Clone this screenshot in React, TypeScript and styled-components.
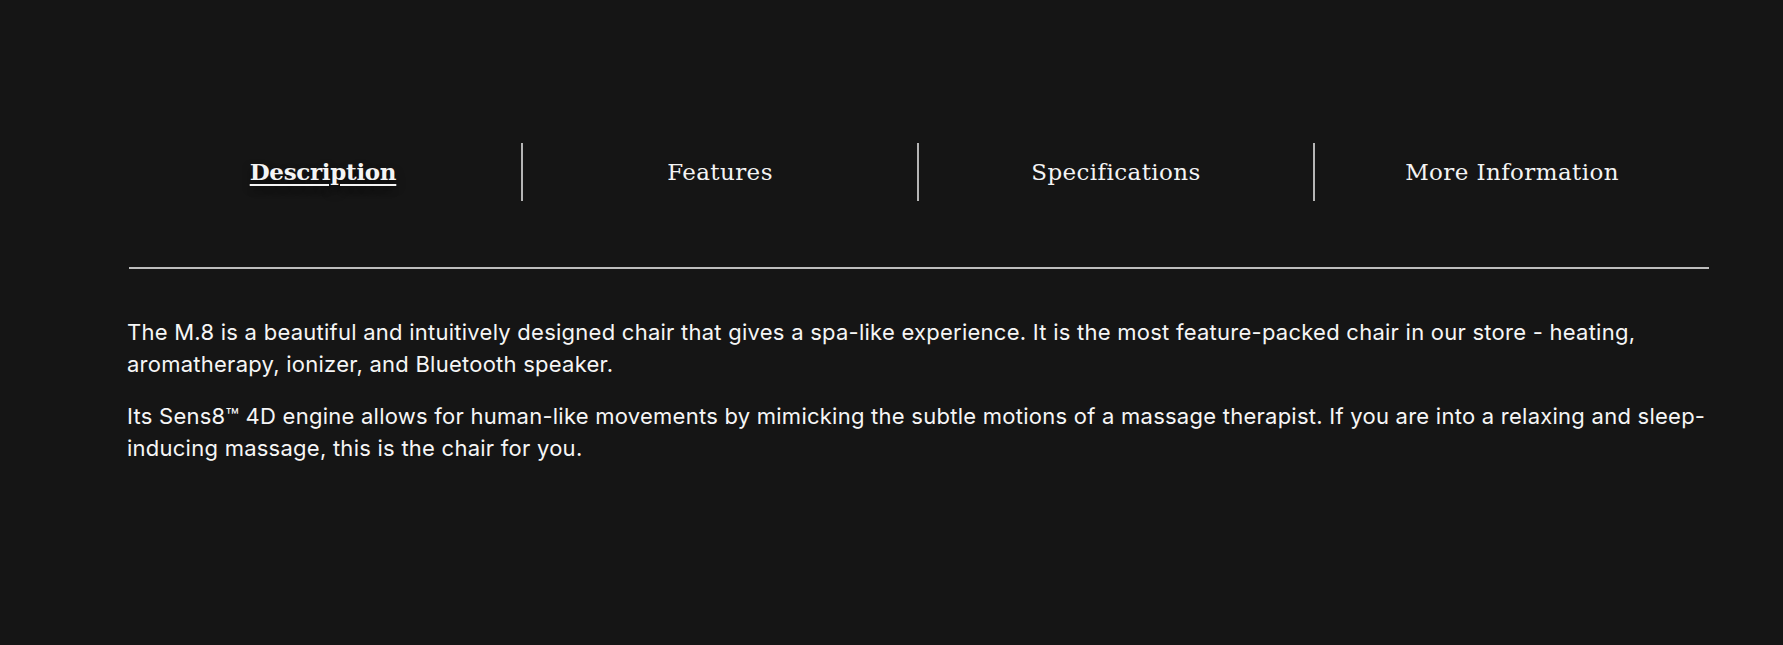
import React, { useState } from "react";
import styled, { createGlobalStyle } from "styled-components";

const GlobalStyle = createGlobalStyle`
  html, body {
    margin: 0;
    padding: 0;
    background: #151515;
  }
  body {
    font-family: Inter, "Noto Sans", sans-serif;
    color: #ffffff;
  }
`;

const Page = styled.div`
  min-height: 645px;
  box-sizing: border-box;
  padding: 143px 74px 0 125px;
`;

const TabBar = styled.div`
  display: grid;
  grid-template-columns: repeat(4, 1fr);
`;

const Tab = styled.button<{ $active?: boolean; $first?: boolean }>`
  height: 58px;
  display: flex;
  align-items: center;
  justify-content: center;
  background: none;
  border: none;
  border-left: ${(p) => (p.$first ? "none" : "2px solid #b5b5b5")};
  padding: 0;
  padding-bottom: 1px;
  color: #f4f4f4;
  font-family: "DejaVu Serif", "Liberation Serif", serif;
  font-size: 23px;
  font-weight: ${(p) => (p.$active ? 700 : 400)};
  letter-spacing: ${(p) => (p.$active ? "-0.3px" : "0.4px")};
  text-decoration: ${(p) => (p.$active ? "underline" : "none")};
  text-decoration-thickness: 2px;
  text-underline-offset: 4px;
  text-shadow: ${(p) => (p.$active ? "0 6px 10px rgba(0, 0, 0, 0.6)" : "none")};
  cursor: pointer;
`;

const Rule = styled.hr`
  margin: 66px 0 0 4px;
  border: none;
  border-top: 2px solid #bdbdbd;
`;

const Body = styled.div`
  padding-top: 47px;
  padding-left: 2px;
  margin-right: -4px;
`;

const Paragraph = styled.p`
  margin: 0 0 20px;
  font-size: 22px;
  line-height: 32px;
  letter-spacing: 0.25px;
  color: #f6f6f6;
`;

const tabs = ["Description", "Features", "Specifications", "More Information"];

export default function App() {
  const [active, setActive] = useState(0);

  return (
    <Page>
      <GlobalStyle />
      <TabBar>
        {tabs.map((t, i) => (
          <Tab key={t} $first={i === 0} $active={i === active} onClick={() => setActive(i)}>
            {t}
          </Tab>
        ))}
      </TabBar>
      <Rule />
      <Body>
        <Paragraph>
          The M.8 is a beautiful and intuitively designed chair that gives a spa-like experience. It is the most
          feature-packed chair in our store - heating, aromatherapy, ionizer, and Bluetooth speaker.
        </Paragraph>
        <Paragraph>
          Its Sens8™ 4D engine allows for human-like movements by mimicking the subtle motions of a massage
          therapist. If you are into a relaxing and sleep-inducing massage, this is the chair for you.
        </Paragraph>
      </Body>
    </Page>
  );
}
